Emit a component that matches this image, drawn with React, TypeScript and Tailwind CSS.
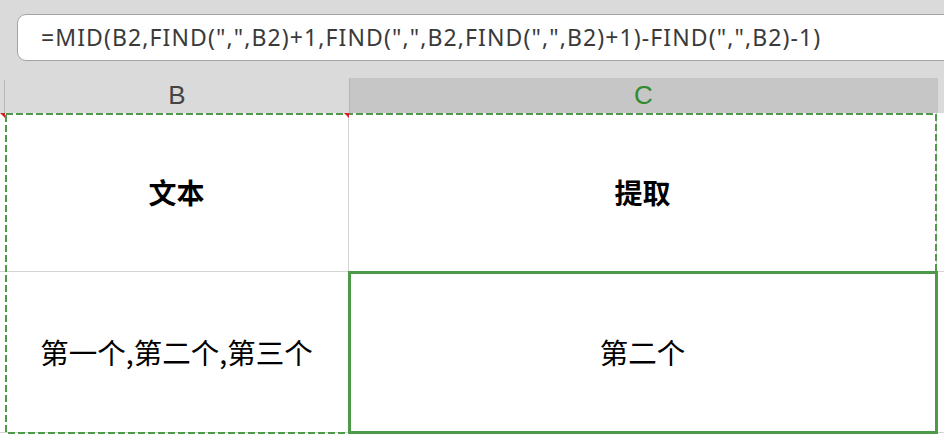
import React from "react";

const FORMULA = '=MID(B2,FIND(",",B2)+1,FIND(",",B2,FIND(",",B2)+1)-FIND(",",B2)-1)';

export default function App() {
  return (
    <div
      className="relative w-[944px] h-[440px] overflow-hidden bg-[#dadada]"
      style={{ fontFamily: '"Noto Sans CJK SC", "Noto Sans", sans-serif' }}
    >
      {/* formula bar */}
      <div className="pt-[14px] pl-[17px]">
        <div
          className="flex items-center h-[47px] w-[960px] rounded-[9px] border border-[#a3a3a3] bg-white pl-[23px] text-[23px] tracking-[1.1px] text-[#3a3a3a] leading-none whitespace-nowrap"
          style={{ fontFamily: '"Noto Sans", "Open Sans", sans-serif' }}
        >
          {FORMULA}
        </div>
      </div>

      {/* column headers */}
      <div className="mt-[17px] flex h-[35px]">
        <div className="w-[5px] h-full flex">
          <div className="w-[4px]" />
          <div className="w-[1px] mt-[2px] bg-[#b8b8b8]" />
        </div>
        <div
          className="w-[344px] h-full flex items-center justify-center text-[26px] text-[#444444]"
          style={{ fontFamily: '"Liberation Sans", Arial, sans-serif' }}
        >
          B
        </div>
        <div
          className="w-[588px] h-full flex items-center justify-center bg-[#c6c6c6] border-l border-[#b4b4b4] text-[26px] text-[#2e8b2e]"
          style={{ fontFamily: '"Liberation Sans", Arial, sans-serif' }}
        >
          C
        </div>
        <div className="flex-1 h-full border-l border-[#c4c4c4]" />
      </div>

      {/* grid body */}
      <div className="relative bg-white h-[327px]">
        <div className="flex h-[159px] border-b border-[#d4d4d4]">
          <div className="w-[5px]" />
          <div className="w-[344px] border-r border-[#d4d4d4] flex items-center justify-center text-[28px] font-bold text-black">
            文本
          </div>
          <div className="w-[588px] border-r border-[#d4d4d4] flex items-center justify-center text-[28px] font-bold text-black">
            提取
          </div>
          <div className="flex-1" />
        </div>
        <div className="flex h-[161px] border-b border-[#d4d4d4]">
          <div className="w-[5px]" />
          <div className="w-[344px] border-r border-[#d4d4d4] flex items-center justify-center text-[28.5px] text-black">
            第一个,第二个,第三个
          </div>
          <div className="w-[588px] border-r border-[#d4d4d4] flex items-center justify-center text-[28.5px] text-black">
            第二个
          </div>
          <div className="flex-1" />
        </div>

        {/* active cell C2 */}
        <div className="absolute left-[348px] top-[158px] w-[590px] h-[163px] border-[3px] border-[#4f9a4a]" />

        {/* copy marquee */}
        <svg
          className="absolute left-0 top-0"
          width="944"
          height="327"
          viewBox="0 0 944 327"
        >
          <rect
            x="6"
            y="1"
            width="930"
            height="319"
            fill="none"
            stroke="#4f9a4a"
            strokeWidth="2"
            strokeDasharray="7 3"
          />
        </svg>

        {/* error indicators */}
        <svg className="absolute left-0 top-0" width="6" height="6" viewBox="0 0 6 6">
          <polygon points="0,0 5,0 5,5" fill="#d42020" />
        </svg>
        <svg className="absolute left-[344px] top-0" width="6" height="6" viewBox="0 0 6 6">
          <polygon points="0,0 5,0 5,5" fill="#d42020" />
        </svg>
      </div>
    </div>
  );
}
